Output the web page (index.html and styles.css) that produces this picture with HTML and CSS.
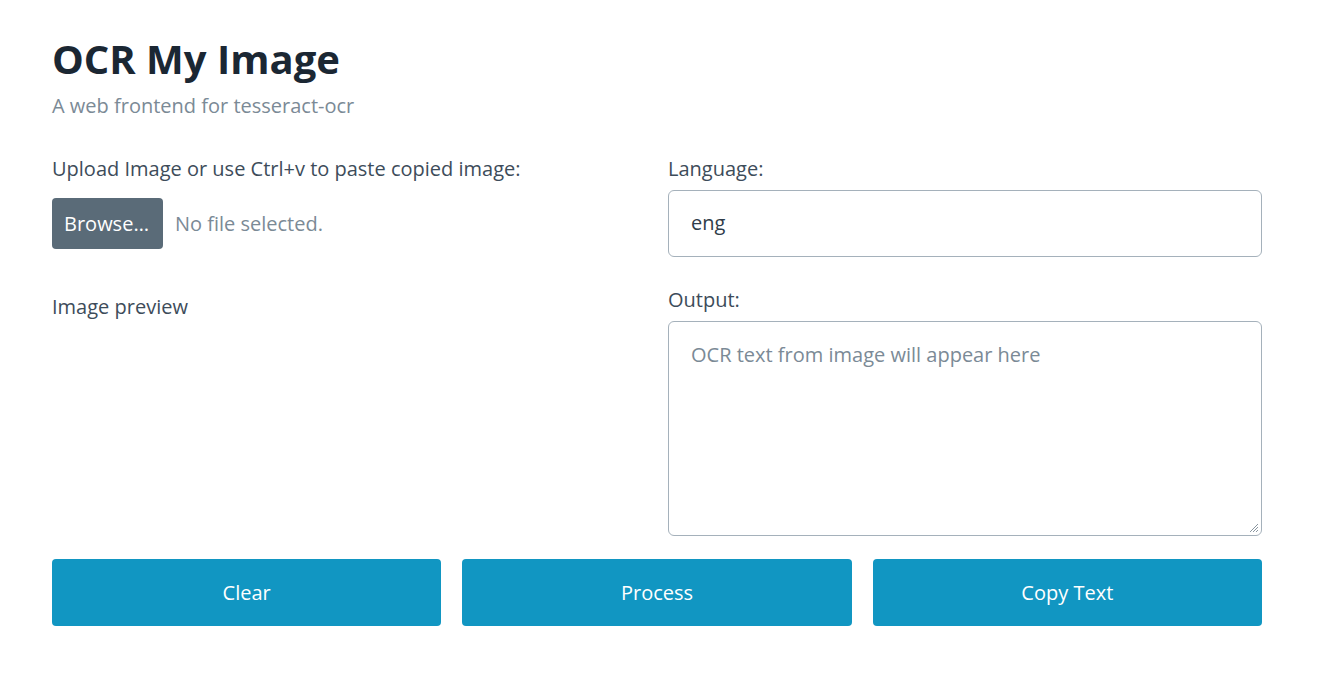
FILE: index.html
```html
<!DOCTYPE html>
<html lang="en">
<head>
<meta charset="utf-8">
<title>OCR My Image</title>
<link rel="stylesheet" href="styles.css">
</head>
<body>
<main class="page">
  <header class="head">
    <h1 class="title">OCR My Image</h1>
    <p class="subtitle">A web frontend for tesseract-ocr</p>
  </header>
  <section class="grid">
    <div class="col">
      <label class="label">Upload Image or use Ctrl+v to paste copied image:</label>
      <div class="file-row">
        <span class="browse">Browse…</span>
        <span class="nofile">No file selected.</span>
      </div>
      <div class="preview-label">Image preview</div>
    </div>
    <div class="col">
      <label class="label">Language:</label>
      <div class="input">eng</div>
      <label class="label label-out">Output:</label>
      <div class="textarea">
        <span class="placeholder">OCR text from image will appear here</span>
        <svg class="grip" width="11" height="11" viewBox="0 0 11 11"><path d="M10 2 L2 10 M10 5 L5 10 M10 8 L8 10" stroke="#8a96a0" stroke-width="1" fill="none"/></svg>
      </div>
    </div>
  </section>
  <div class="buttons">
    <button class="btn">Clear</button>
    <button class="btn">Process</button>
    <button class="btn">Copy Text</button>
  </div>
</main>
</body>
</html>
```
FILE: styles.css
```css
* { box-sizing: border-box; }
body {
  margin: 0;
  background: #ffffff;
  font-family: "Open Sans", "Noto Sans", sans-serif;
  color: #3d4c5a;
}
.page {
  width: 1210px;
  margin-left: 52px;
  padding-top: 33px;
}
.title {
  margin: 0;
  font-size: 40px;
  font-weight: 700;
  color: #1b2733;
  line-height: 52px;
}
.subtitle {
  margin: 8px 0 0;
  font-size: 20px;
  color: #7b8a96;
  line-height: 26px;
}
.grid {
  display: grid;
  grid-template-columns: 1fr 1fr;
  column-gap: 22px;
  margin-top: 37px;
}
.col { display: flex; flex-direction: column; }
.label {
  font-size: 20px;
  line-height: 26px;
  color: #3d4c5a;
}
.file-row {
  display: flex;
  align-items: center;
  gap: 12px;
  margin-top: 16px;
}
.browse {
  background: #5a6b78;
  color: #ffffff;
  font-size: 20px;
  height: 51px;
  line-height: 51px;
  padding: 0 14px 0 12px;
  border-radius: 4px;
}
.nofile { font-size: 20px; color: #7b8a96; }
.preview-label {
  margin-top: 45px;
  font-size: 20px;
  line-height: 26px;
}
.input {
  margin-top: 8px;
  height: 67px;
  border: 1px solid #a5b1bb;
  border-radius: 6px;
  padding: 0 22px;
  font-size: 20px;
  line-height: 64px;
  color: #2f3d4a;
}
.label-out { margin-top: 30px; }
.textarea {
  position: relative;
  margin-top: 8px;
  height: 215px;
  border: 1px solid #a5b1bb;
  border-radius: 6px;
  padding: 20px 22px;
  font-size: 20px;
  line-height: 26px;
}
.placeholder { color: #7b8a96; }
.grip { position: absolute; right: 2px; bottom: 2px; }
.buttons {
  display: grid;
  grid-template-columns: 1fr 1fr 1fr;
  column-gap: 21px;
  margin-top: 23px;
}
.btn {
  height: 67px;
  border: 0;
  border-radius: 4px;
  background: #1196c2;
  color: #ffffff;
  font-family: inherit;
  font-size: 20px;
}
```
